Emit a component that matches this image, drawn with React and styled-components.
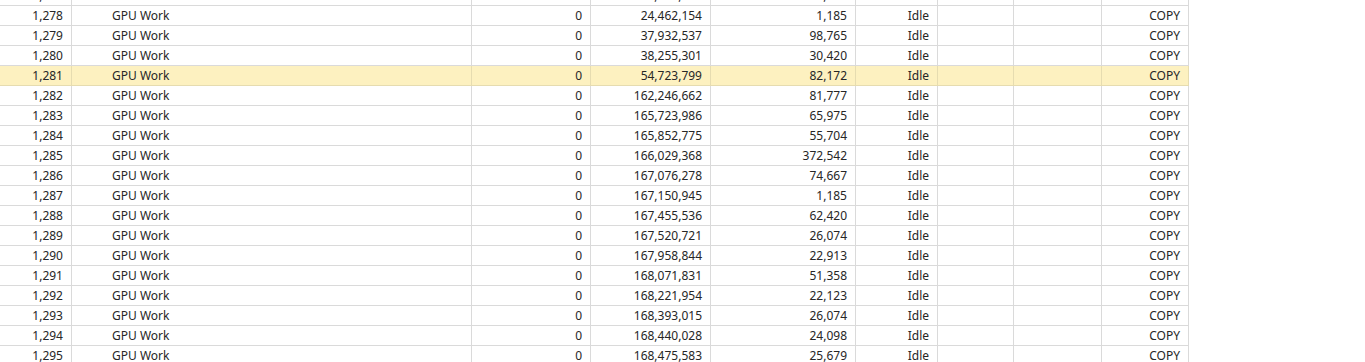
import React from "react";
import styled, { createGlobalStyle } from "styled-components";

const Global = createGlobalStyle`
  html, body { margin: 0; padding: 0; background: #fff; overflow: hidden; }
  body { font-family: "Noto Sans", "Noto Sans CJK SC", "Liberation Sans", sans-serif; }
`;

const Sheet = styled.div`
  margin-top: -14px;
  width: 1189px;
`;

const Row = styled.div`
  display: grid;
  grid-template-columns: 72px 400px 119px 120px 145px 82px 76px 88px 87px;
  height: 20px;
  box-sizing: border-box;
  border-bottom: 1px solid ${(p) => (p.$hl ? "#e6dcb0" : "#dadada")};
  background: ${(p) => (p.$hl ? "#fdf1c0" : "#fff")};
`;

const Cell = styled.div`
  box-sizing: border-box;
  border-right: 1px solid ${(p) => (p.$hl ? "#e6dcb0" : "#dadada")};
  padding: ${(p) => (p.$left ? "0 0 0 40px" : "0 8px 0 0")};
  text-align: ${(p) => (p.$left ? "left" : "right")};
  font-size: 12px;
  line-height: 19px;
  color: #262626;
  white-space: nowrap;
  overflow: hidden;
`;

const rows = [
  [1277, "0", "13,720,451", "98,765"],
  [1278, "0", "24,462,154", "1,185"],
  [1279, "0", "37,932,537", "98,765"],
  [1280, "0", "38,255,301", "30,420"],
  [1281, "0", "54,723,799", "82,172"],
  [1282, "0", "162,246,662", "81,777"],
  [1283, "0", "165,723,986", "65,975"],
  [1284, "0", "165,852,775", "55,704"],
  [1285, "0", "166,029,368", "372,542"],
  [1286, "0", "167,076,278", "74,667"],
  [1287, "0", "167,150,945", "1,185"],
  [1288, "0", "167,455,536", "62,420"],
  [1289, "0", "167,520,721", "26,074"],
  [1290, "0", "167,958,844", "22,913"],
  [1291, "0", "168,071,831", "51,358"],
  [1292, "0", "168,221,954", "22,123"],
  [1293, "0", "168,393,015", "26,074"],
  [1294, "0", "168,440,028", "24,098"],
  [1295, "0", "168,475,583", "25,679"],
];

const fmt = (n) => n.toLocaleString("en-US");

export default function App() {
  return (
    <>
      <Global />
      <Sheet>
        {rows.map(([id, a, b, c]) => {
          const hl = id === 1281;
          return (
            <Row key={id} $hl={hl}>
              <Cell $hl={hl}>{fmt(id)}</Cell>
              <Cell $hl={hl} $left>GPU Work</Cell>
              <Cell $hl={hl}>{a}</Cell>
              <Cell $hl={hl}>{b}</Cell>
              <Cell $hl={hl}>{c}</Cell>
              <Cell $hl={hl}>Idle</Cell>
              <Cell $hl={hl}></Cell>
              <Cell $hl={hl}></Cell>
              <Cell $hl={hl}>COPY</Cell>
            </Row>
          );
        })}
      </Sheet>
    </>
  );
}
